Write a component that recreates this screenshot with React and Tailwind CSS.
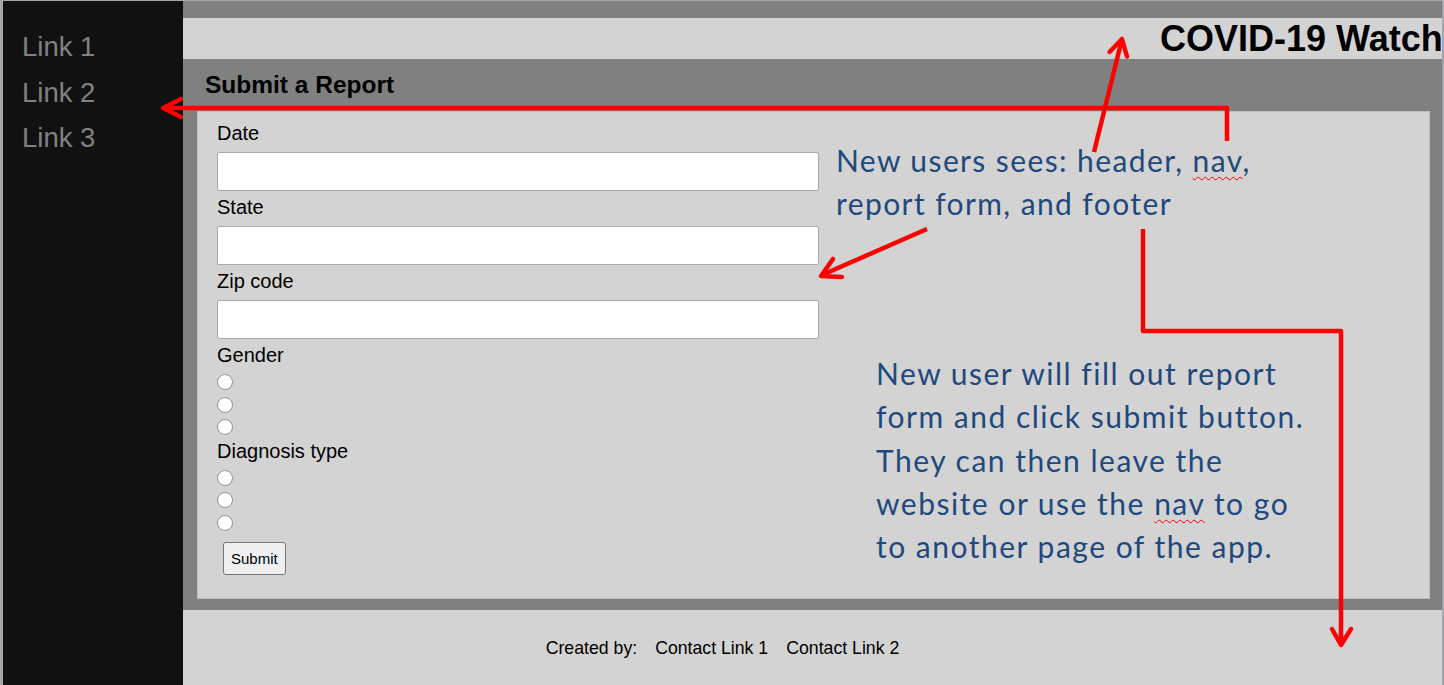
import React from 'react';

const font = { fontFamily: '"Liberation Sans", Arial, sans-serif' };
const noteFont = { fontFamily: 'Lato, "Open Sans", sans-serif' };

const FieldLabel = ({ children, className = '' }) => (
  <div className={`h-[23px] text-[20px] leading-[23px] text-black ${className}`}>{children}</div>
);

const TextField = ({ className = '' }) => (
  <input
    type="text"
    className={`block w-[602px] h-[39px] bg-white border border-[#a9a9a9] rounded-[2px] outline-none ${className}`}
  />
);

const Radio = ({ name }) => (
  <div className="h-[22.4px] flex items-center">
    <input
      type="radio"
      name={name}
      className="appearance-none block w-[16px] h-[16px] rounded-full border border-[#939393] bg-white m-0"
    />
  </div>
);

// spell-check squiggle under "nav"
const Nav = ({ children }) => (
  <span className="underline decoration-wavy decoration-[#ff0000] decoration-1 underline-offset-[4px]">{children}</span>
);

export default function App() {
  return (
    <div className="relative w-[1444px] h-[685px] overflow-hidden" style={font}>
      <div className="flex w-full h-full border-t border-l-[3px] border-r-[2px] border-[#a3a7ab] bg-[#d3d3d3]">
        {/* side nav */}
        <nav className="w-[180px] shrink-0 bg-[#111111] pt-[23px] pl-[19px]">
          {['Link 1', 'Link 2', 'Link 3'].map((l) => (
            <a key={l} href="#" className="block text-[27.5px] leading-[45.5px] text-[#818181]">
              {l}
            </a>
          ))}
        </nav>

        <div className="flex-1 min-w-0 flex flex-col">
          <div className="h-[17px] bg-[#808080]" />
          <header className="h-[41px] bg-[#d3d3d3] overflow-hidden whitespace-nowrap pl-[977px]">
            <h1 className="text-[36px] leading-[41px] font-bold text-black">COVID-19 Watch</h1>
          </header>

          <section className="bg-[#808080] pl-[14px] pr-[12px] pb-[11px]">
            <h2 className="h-[52px] flex items-center pl-[8px] text-[24.5px] font-bold text-black">
              Submit a Report
            </h2>
            <div className="h-[488px] bg-[#d3d3d3] border border-[#bdbdbd] pt-[10px] pl-[19px]">
              <form className="flex flex-col items-start">
                <FieldLabel>Date</FieldLabel>
                <TextField className="mt-[7px]" />
                <FieldLabel className="mt-[5px]">State</FieldLabel>
                <TextField className="mt-[7px]" />
                <FieldLabel className="mt-[5px]">Zip code</FieldLabel>
                <TextField className="mt-[7px]" />
                <FieldLabel className="mt-[5px]">Gender</FieldLabel>
                <div className="mt-[4px]">
                  <Radio name="gender" />
                  <Radio name="gender" />
                  <Radio name="gender" />
                </div>
                <FieldLabel className="mt-[1.5px]">Diagnosis type</FieldLabel>
                <div className="mt-[4px]">
                  <Radio name="diag" />
                  <Radio name="diag" />
                  <Radio name="diag" />
                </div>
                <button
                  type="button"
                  className="mt-[8.5px] ml-[6px] h-[33px] px-[7px] bg-[#efefef] border border-[#767676] rounded-[3px] text-[15px] text-black"
                >
                  Submit
                </button>
              </form>
            </div>
          </section>

          <footer className="flex-1 flex items-center justify-center gap-[18px] pr-[180px] pt-[1px] text-[17.7px] text-black">
            <span>Created by:</span>
            <a href="#">Contact Link 1</a>
            <a href="#">Contact Link 2</a>
          </footer>
        </div>
      </div>

      {/* annotation notes */}
      <div
        className="absolute left-[836px] top-[139px] text-[30px] leading-[43.3px] tracking-[1.4px] text-[#1f497d] whitespace-nowrap"
        style={noteFont}
      >
        <div>New users sees: header, <Nav>nav</Nav>,</div>
        <div>report form, and footer</div>
      </div>
      <div
        className="absolute left-[876px] top-[352px] text-[30px] leading-[43.3px] tracking-[1.5px] text-[#1f497d] whitespace-nowrap"
        style={noteFont}
      >
        <div>New user will fill out report</div>
        <div>form and click submit button.</div>
        <div>They can then leave the</div>
        <div>website or use the <Nav>nav</Nav> to go</div>
        <div>to another page of the app.</div>
      </div>

      {/* annotation arrows */}
      <svg
        className="absolute left-0 top-0 pointer-events-none"
        width="1444"
        height="685"
        viewBox="0 0 1444 685"
        fill="none"
        stroke="#ff0000"
        strokeWidth="4.5"
        strokeLinejoin="round"
      >
        <path d="M1227 141 V108 H163" />
        <path d="M181 99 L163 108 L181 117" strokeLinecap="round" />
        <path d="M1094 152 L1122 39" />
        <path d="M1109.5 52 L1122 39 L1127 56.5" strokeLinecap="round" />
        <path d="M927 229 L822 275" />
        <path d="M833 259 L821 276 L842 277" strokeLinecap="round" />
        <path d="M1143 229 V331 H1341 V645" />
        <path d="M1332 629 L1341 645 L1351 629" strokeLinecap="round" />
      </svg>
    </div>
  );
}
